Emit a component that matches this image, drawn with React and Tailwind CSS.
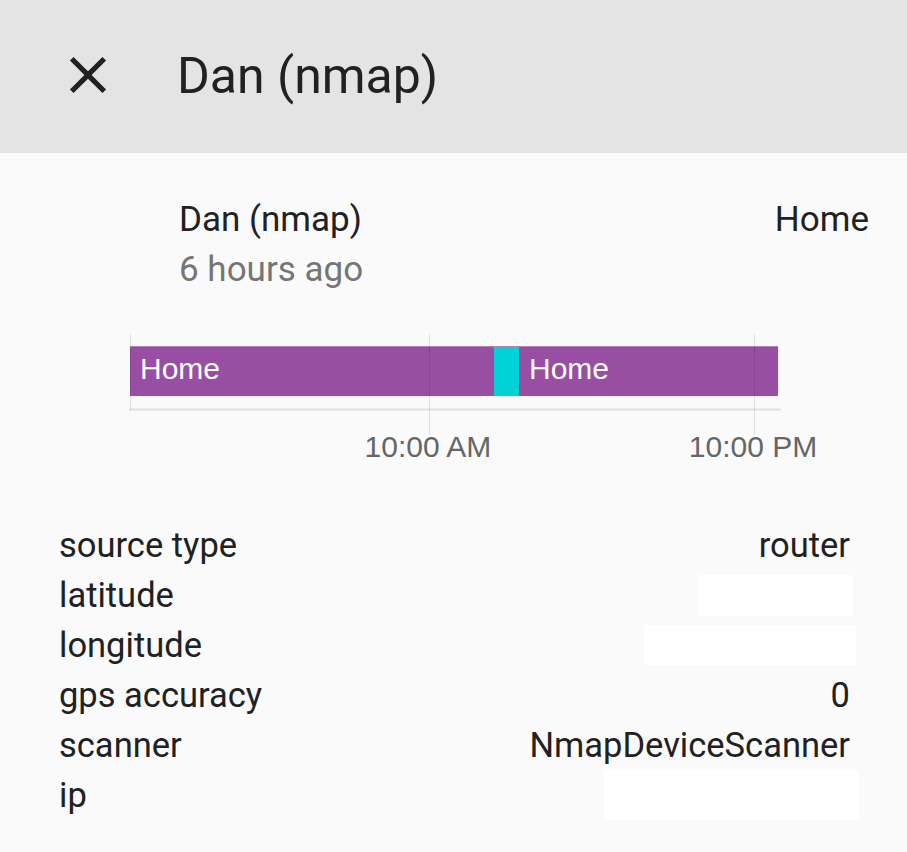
const ROBOTO = { fontFamily: 'Roboto, "Noto Sans", sans-serif' };

const ATTRIBUTES = [
  { label: 'source type', value: 'router' },
  { label: 'latitude', hidden: 'h-[41px] w-[155px] mr-[-3px]' },
  { label: 'longitude', hidden: 'h-[40px] w-[212px] mr-[-6px]' },
  { label: 'gps accuracy', value: '0' },
  { label: 'scanner', value: 'NmapDeviceScanner' },
  { label: 'ip', hidden: 'h-[50px] w-[255px] mr-[-9px]' },
];

function Timeline() {
  return (
    <svg width="907" height="205" viewBox="0 0 907 205" className="block">
      <rect x="130" y="52" width="364" height="49" fill="#984ea3" />
      <rect x="494" y="52" width="25" height="49" fill="#00d2d5" />
      <rect x="519" y="52" width="259" height="49" fill="#984ea3" />
      <line x1="130" y1="51.5" x2="778" y2="51.5" stroke="#b57fbd" />
      <line x1="130.5" y1="39" x2="130.5" y2="116" stroke="rgba(0,0,0,0.1)" />
      <line x1="429.5" y1="39" x2="429.5" y2="140" stroke="rgba(0,0,0,0.1)" />
      <line x1="754.5" y1="39" x2="754.5" y2="140" stroke="rgba(0,0,0,0.1)" />
      <line x1="130" y1="114.5" x2="781" y2="114.5" stroke="rgba(0,0,0,0.1)" strokeWidth="2" />
      <g style={{ fontFamily: '"Liberation Sans", Arial, sans-serif' }} fontSize="30">
        <text x="140" y="84" fill="#ffffff">Home</text>
        <text x="529" y="84" fill="#ffffff">Home</text>
        <text x="428" y="162" fill="#666666" textAnchor="middle">10:00 AM</text>
        <text x="753" y="162" fill="#666666" textAnchor="middle">10:00 PM</text>
      </g>
    </svg>
  );
}

export default function App() {
  return (
    <div className="h-[852px] w-[907px] overflow-hidden bg-[#fafafa] text-[#212121]" style={ROBOTO}>
      <header className="flex h-[153px] items-center bg-[#e4e4e4]">
        <svg width="62" height="62" viewBox="0 0 24 24" className="ml-[57px] mt-[-4px]">
          <path
            d="M19,6.41L17.59,5L12,10.59L6.41,5L5,6.41L10.59,12L5,17.59L6.41,19L12,13.41L17.59,19L19,17.59L13.41,12L19,6.41Z"
            fill="#212121"
          />
        </svg>
        <h1 className="ml-[58px] mt-[-2px] text-[50px] leading-none font-normal">Dan (nmap)</h1>
      </header>

      <div className="flex justify-between pl-[179px] pr-[38px] pt-[42px] text-[35px] leading-[50px]">
        <div>
          <div>Dan (nmap)</div>
          <div className="text-[#757575]">6 hours ago</div>
        </div>
        <div>Home</div>
      </div>

      <Timeline />

      <div className="mt-[20px] pl-[59px] pr-[57px] text-[34.5px] leading-[50px]">
        {ATTRIBUTES.map((row) => (
          <div key={row.label} className="flex items-center justify-between">
            <span>{row.label}</span>
            {row.hidden ? (
              <span className={`bg-white ${row.hidden}`} />
            ) : (
              <span>{row.value}</span>
            )}
          </div>
        ))}
      </div>
    </div>
  );
}
